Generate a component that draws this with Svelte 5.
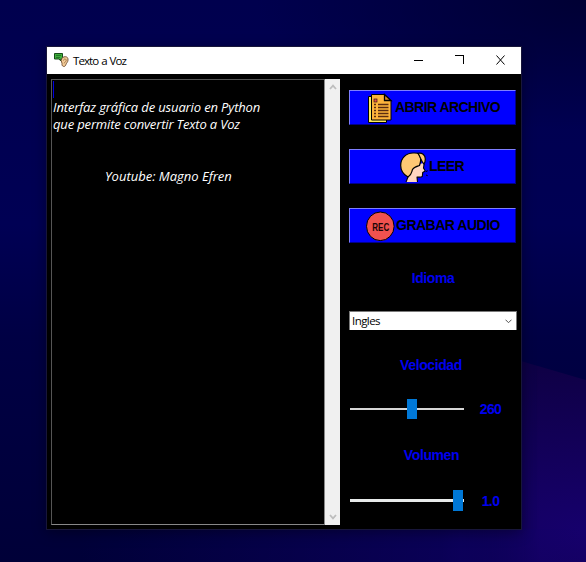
<script>
  const lines = [
    { text: '' },
    { text: 'Interfaz gráfica de usuario en Python', cls: 'a' },
    { text: 'que permite convertir Texto a Voz', cls: 'b' },
    { text: '' },
    { text: '' },
    { text: 'Youtube: Magno Efren', cls: 'c' }
  ];
  let speed = $state(260);
  let volume = $state(1);
</script>

<main class="desktop">
  <section class="window">
    <header class="titlebar">
      <svg class="appicon" width="16" height="16" viewBox="0 0 16 16">
        <path d="M.5 1.500h8v5.500H6.800v2L5 7H.5z" fill="#3fae3c" stroke="#174d1a" />
        <path d="M2 3.500h5M2 5.500h4" stroke="#1d6b22" stroke-width=".8" />
        <path d="M7.200 8.500C7.500 5.600 9.600 4.700 11.200 4.700c2.100 0 3 1.300 2.800 3.500-.2 2-1.500 2.700-2 4.200-.4 1.400-1.200 2.300-2.500 2-1.400-.3-1.700-1.700-1.500-3z" fill="#f3cc98" stroke="#6b4a2d" stroke-width=".9" />
        <path d="M9.500 8.500c.1-1.900 2.800-2 2.700-.1-.1 1.300-1.500 1.500-2 3" fill="none" stroke="#8b6239" stroke-width=".8" />
      </svg>
      <span class="title">Texto a Voz</span>
      <svg class="controls" width="110" height="27" viewBox="0 0 110 27" shape-rendering="crispEdges">
        <path d="M3 13.500h9M44 8.500h9M52.500 8v9" stroke="#000" fill="none" />
        <path d="M85.500 8.500l8 9M93.500 8.500l-8 9" stroke="#000" fill="none" shape-rendering="auto" />
      </svg>
    </header>

    <div class="content">
      <div class="editor">
        <div class="text">
          {#each lines as line}
            <p class={line.cls}>{line.text}</p>
          {/each}
          <i class="caret"></i>
        </div>
        <div class="scrollbar">
          <svg width="8" height="6" viewBox="0 0 8 6"><path d="M1 5l3-3.300L7 5" fill="none" stroke="#bdbdbd" stroke-width="1.800" /></svg>
          <svg width="8" height="6" viewBox="0 0 8 6"><path d="M1 1l3 3.300L7 1" fill="none" stroke="#bdbdbd" stroke-width="1.800" /></svg>
        </div>
      </div>

      <aside class="panel">
        <button class="open">
          <svg width="28" height="32" viewBox="0 0 28 32">
            <path d="M1.500 4.500h18v26h-18z" fill="#fbe95e" stroke="#000" />
            <path d="M4.500 2.500h13l6.500 6V28H4.500z" fill="#fdb43b" stroke="#000" />
            <path d="M17.500 2.500v6H24z" fill="#e08a1e" stroke="#000" stroke-width="1.300" />
            <rect x="7" y="7" width="3" height="3" fill="#e8504c" stroke="#3a1a10" stroke-width=".7" />
            <path d="M11 12.500h10.500M11 15.500h10.500M11 18.500h10.500M11 21.500h10.500M11 24.500h10.500" stroke="#5b2c10" stroke-width="1.300" />
            <path d="M7 12.500h2M7 15.500h2M7 18.500h2M7 21.500h2M7 24.500h2" stroke="#5b2c10" stroke-width="1.300" />
          </svg>
          <span>ABRIR ARCHIVO</span>
        </button>
        <button class="read">
          <svg width="29" height="32" viewBox="0 0 29 32">
            <path d="M6 31l2-5L14 14l10-2-.5 5 1.700 3-2.500 1.500-.4 4c-1.500 1-3.500.6-5.300.5l.5 5z" fill="#ffd6c0" />
            <path d="M6 31l2-5M24.200 12.500l-.7 4.500 1.700 3-2.500 1.500-.4 4c-1.500 1-3.500.6-5.300.5l.5 5" fill="none" stroke="#000" stroke-width="1.100" stroke-linejoin="round" />
            <path d="M8 26C3.500 23.500.7 19.500.7 14.500.7 7 6.500 2 13 2c2.500 0 4.500-.3 6.500 1 1.500 3.500 1.500 7.500 0 11.500-3 1-5.500 1.500-7 4-1 2.500-.5 5-4.500 7.500z" fill="#ffc774" stroke="#000" stroke-width="1.200" />
            <path d="M18 2.300c4-1 7.300 1.700 7.300 5.700 0 2-.3 3.500-1.300 5-2.500-2-3.500-7-6-10.700z" fill="#ffc774" stroke="#000" stroke-width="1.200" />
            <path d="M26 20.500l1.700-.7M26 24l1.700.7" stroke="#000" />
          </svg>
          <span>LEER</span>
        </button>
        <button class="record">
          <svg width="30" height="32" viewBox="0 0 30 32">
            <ellipse cx="14.300" cy="16.300" rx="13.800" ry="14.300" fill="#f0524f" stroke="#000" />
            <text x="6.300" y="20.500" textLength="17" lengthAdjust="spacingAndGlyphs">REC</text>
          </svg>
          <span>GRABAR AUDIO</span>
        </button>

        <h2 class="idioma">Idioma</h2>
        <div class="combo">
          <span>Ingles</span>
          <svg width="7" height="5" viewBox="0 0 7 5"><path d="M.5.7l3 3 3-3" fill="none" stroke="#555" /></svg>
        </div>

        <h2 class="velocidad">Velocidad</h2>
        <div class="slider one">
          <div class="track"><div class="thumb" style:margin-left="{(speed - 146) / 2}px"></div></div>
          <output>{speed}</output>
        </div>

        <h2 class="volumen">Volumen</h2>
        <div class="slider two">
          <div class="track"><div class="thumb" style:margin-left="{volume * 103}px"></div></div>
          <output>{volume.toFixed(1)}</output>
        </div>
      </aside>
    </div>
  </section>
</main>

<style>
  :global(body) { margin: 0; overflow: hidden; }
  .desktop {
    box-sizing: border-box;
    position: relative;
    isolation: isolate;
    width: 586px;
    height: 562px;
    padding: 46px 0 0 46px;
    background:
      radial-gradient(ellipse 330px 130px at 586px 0, #000034, transparent),
      linear-gradient(180deg, #00004e 0%, #000054 40%, #000044 60%, #000038 100%);
  }
  /* violet wave in the lower right corner of the wallpaper */
  .desktop::before {
    content: '';
    position: absolute;
    inset: 0;
    z-index: -1;
    background:
      radial-gradient(ellipse 420px 190px at 586px 530px, #16006c, transparent),
      #0e0040;
    clip-path: polygon(440px 340px, 521px 361px, 586px 380px, 586px 562px, 440px 562px);
    -webkit-mask-image: linear-gradient(90deg, transparent 440px, #000 540px);
    mask-image: linear-gradient(90deg, transparent 440px, #000 540px);
  }
  .desktop::after {
    content: '';
    position: absolute;
    inset: 0;
    z-index: -1;
    background: linear-gradient(90deg, transparent 80px, rgba(16, 0, 104, .65) 460px, transparent 586px);
    clip-path: inset(529px 0 0 0);
  }
  .window {
    box-sizing: border-box;
    width: 476px;
    height: 484px;
    border: 1px solid #18163a;
    background: #000;
    box-shadow: 0 3px 12px rgba(0, 0, 0, .35);
  }
  .titlebar {
    display: flex;
    height: 27px;
    background: #fff;
  }
  .appicon { margin: 5px 3px 0 7px; flex: none; }
  .title {
    font: 11.500px/27px "Open Sans", sans-serif;
    letter-spacing: -.9px;
    word-spacing: .8px;
    color: #000;
    flex: 1;
    white-space: nowrap;
  }
  .controls { flex: none; }
  .content { display: flex; padding: 5px 4px 4px; }
  .editor { display: flex; width: 289px; height: 446px; }
  .text {
    box-sizing: border-box;
    position: relative;
    width: 274px;
    border: 1px solid #555;
    border-right-color: #888;
    border-bottom-color: #888;
    padding: 2px 1px;
    color: #fff;
    font: italic 13px/17.200px "Open Sans", sans-serif;
    white-space: nowrap;
  }
  .text p { margin: 0; height: 17.200px; }
  .text p.a { letter-spacing: -.14px; }
  .text p.b { letter-spacing: -.16px; }
  .text p.c { padding-left: 52px; }
  .caret { position: absolute; left: 1px; top: 1px; width: 1px; height: 17px; background: #0000e0; }
  .scrollbar {
    box-sizing: border-box;
    width: 15px;
    background: #f0f0f0;
    padding: 5px 0;
    display: flex;
    flex-direction: column;
    justify-content: space-between;
    align-items: center;
  }
  .panel { width: 168px; margin-left: 9px; padding-top: 11px; }
  button {
    box-sizing: border-box;
    display: flex;
    align-items: center;
    width: 167px;
    height: 35px;
    margin: 0 0 24px;
    padding: 0;
    border: 1px solid #7f7fff;
    border-right-color: #00008a;
    border-bottom-color: #00008a;
    background: #0000ff;
    color: #000;
    font: bold 14px/33px "Liberation Sans", Arial, sans-serif;
    letter-spacing: -.55px;
    white-space: nowrap;
  }
  button svg { flex: none; }
  .open { padding-left: 17px; }
  .read { padding-left: 50px; }
  .record { padding-left: 16px; margin-bottom: 0; letter-spacing: -.5px; }
  .record text { font: bold 11px "Liberation Sans", sans-serif; fill: #1a0505; letter-spacing: 0; }
  h2 {
    margin: 0;
    height: 20px;
    text-align: center;
    color: #0000f0;
    font: bold 14px/20px "Liberation Sans", Arial, sans-serif;
    letter-spacing: -.4px;
  }
  .idioma { margin-top: 25px; }
  .combo {
    box-sizing: border-box;
    display: flex;
    align-items: center;
    justify-content: space-between;
    width: 168px;
    height: 19px;
    margin-top: 23px;
    padding: 0 4px 0 2px;
    background: #fff;
    border: 1px solid #7a7a7a;
    border-bottom: 0;
    color: #000;
    font: 11.500px/18px "Open Sans", sans-serif;
    letter-spacing: -.55px;
  }
  .velocidad { margin-top: 25px; padding-right: 4px; }
  .slider { display: flex; align-items: center; height: 20px; padding-left: 1px; }
  .track { display: flex; align-items: center; width: 114px; height: 2px; background: #d6d6d6; }
  .thumb { width: 10px; height: 20px; background: #0078d7; flex: none; }
  .one { margin-top: 24px; }
  .volumen { margin-top: 26px; padding-right: 3px; }
  .two { margin-top: 25px; height: 21px; }
  .two .track { height: 3px; background: #e7eaea; }
  .two .thumb { height: 21px; }
  output {
    width: 53px;
    text-align: center;
    color: #0000f0;
    font: bold 14px/20px "Liberation Sans", Arial, sans-serif;
    letter-spacing: -.6px;
  }
</style>
